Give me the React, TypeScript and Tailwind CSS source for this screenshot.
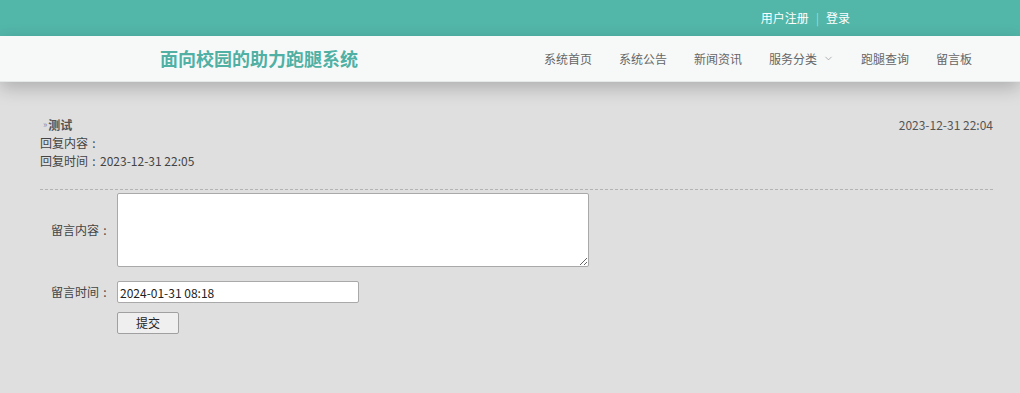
import { ChevronDown } from "lucide-react";

const navItems = ["系统首页", "系统公告", "新闻资讯", "服务分类", "跑腿查询", "留言板"];

const font = { fontFamily: '"Noto Sans CJK SC", "Noto Sans", sans-serif' };

// full-width colon drawn centered in its cell, like the reference font
const Colon = () => <span className="inline-block w-[12px] text-center">:</span>;

export default function App() {
  return (
    <div className="min-h-[393px] bg-[#dfdfdf] text-[12px] text-[#444]" style={font}>
      {/* top strip */}
      <div className="h-[36px] bg-[#52b6a9] flex items-center justify-end pr-[170px] text-white text-[12px]">
        <span>用户注册</span>
        <span className="mx-[7px] text-[#9fdcd3]">|</span>
        <span>登录</span>
      </div>

      {/* nav */}
      <div className="relative z-10 h-[46px] bg-[#f7f9f9] border-b border-[#e6e9e9] shadow-[0_6px_18px_rgba(0,0,0,0.22)] flex items-center pl-[160px] pr-[48px]">
        <div className="text-[18px] font-bold text-[#4fb0a3]">面向校园的助力跑腿系统</div>
        <div className="ml-auto flex items-center gap-[27px] text-[#666]">
          {navItems.map((item) => (
            <span key={item} className="flex items-center">
              {item}
              {item === "服务分类" && (
                <ChevronDown className="ml-[6px] text-[#888]" size={11} strokeWidth={1.4} />
              )}
            </span>
          ))}
        </div>
      </div>

      {/* content */}
      <div className="pl-[40px] pr-[27px] pt-[34px]">
        <div className="flex justify-between leading-[18px]">
          <div>
            <div className="flex items-end">
              <span className="text-[9px] text-[#8c8cb0] ml-[3px] mr-[1px]">»</span>
              <span className="font-bold text-[#555]">测试</span>
            </div>
            <div>
              回复内容<Colon />
            </div>
            <div>
              回复时间<Colon />2023-12-31 22:05
            </div>
          </div>
          <div className="text-[#555]">2023-12-31 22:04</div>
        </div>

        <div className="mt-[19px] border-t border-dashed border-[#b3b3b3]" />

        <div className="mt-[3px] flex flex-col gap-[14px]">
          <div className="flex items-center">
            <label className="w-[77px] text-right pr-[6px] text-[#444]">
              留言内容<Colon />
            </label>
            <textarea className="w-[472px] h-[74px] bg-white border border-[#a9a9a9] rounded-[2px]" />
          </div>
          <div className="flex items-center">
            <label className="w-[77px] text-right pr-[6px] text-[#444]">
              留言时间<Colon />
            </label>
            <input
              className="w-[242px] h-[22px] bg-white border border-[#a9a9a9] rounded-[2px] px-[2px] text-[12px] text-[#222]"
              defaultValue="2024-01-31 08:18"
            />
          </div>
        </div>
        <div className="pl-[77px] mt-[9px]">
          <button className="w-[62px] h-[22px] bg-[#efefef] border border-[#a0a0a0] rounded-[2px] text-[12px] text-[#222]">
            提交
          </button>
        </div>
      </div>
    </div>
  );
}
